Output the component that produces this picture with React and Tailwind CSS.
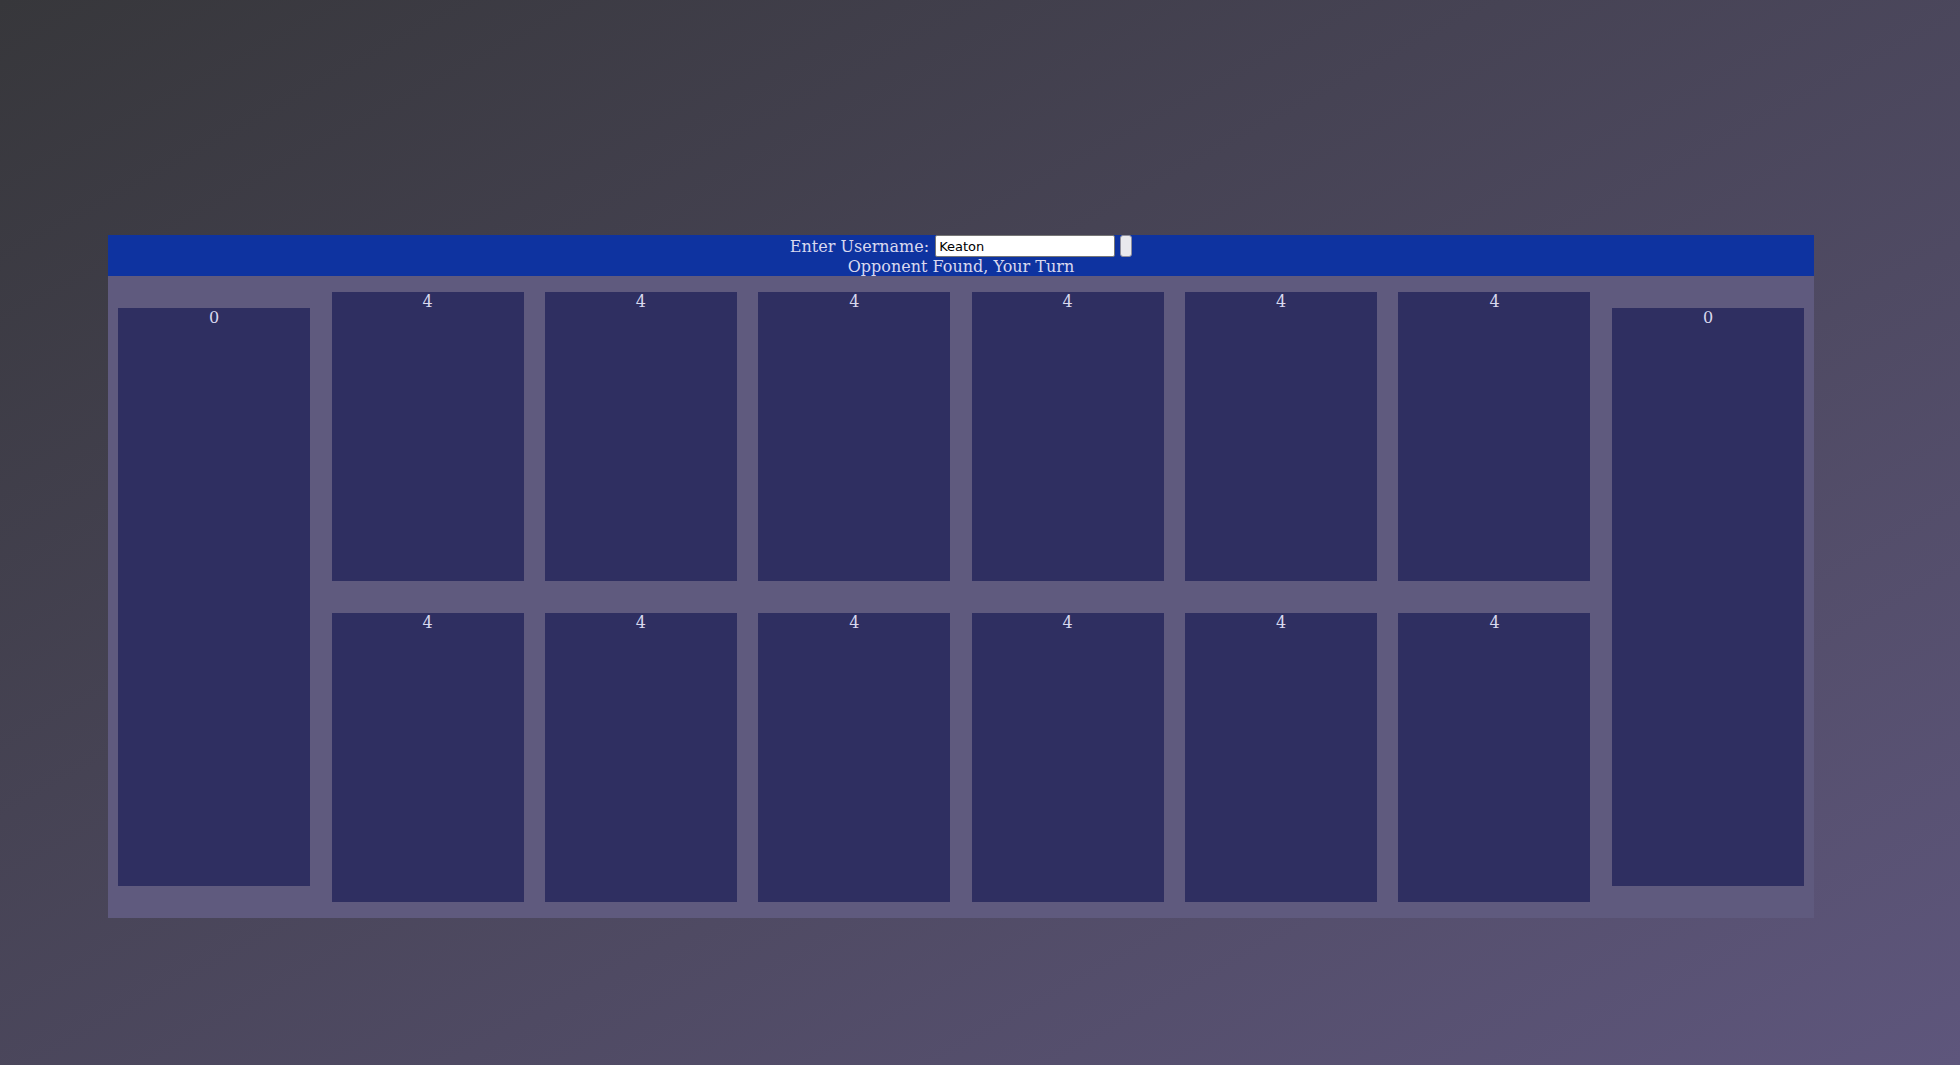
import React, { useState } from 'react';

const serif = { fontFamily: '"DejaVu Serif", serif' };

const Pit = ({ count, className = '' }) => (
  <div className={`w-[192px] bg-[#2f2f61] text-center text-[16px] leading-[19px] text-[#d9d9ef] ${className}`}>
    {count}
  </div>
);

const App = () => {
  const [username, setUsername] = useState('Keaton');
  const top = [4, 4, 4, 4, 4, 4];
  const bottom = [4, 4, 4, 4, 4, 4];

  return (
    <div
      className="min-h-[1065px] w-full bg-[linear-gradient(to_bottom_right,#37373b,#5e567c)] pt-[235px] pl-[108px]"
      style={serif}
    >
      <div className="w-[1706px]">
        {/* Header */}
        <div className="flex h-[41px] flex-col items-center bg-[#0e33a0] text-[16px] text-[#d9d9ef]">
          <div className="flex h-[22px] items-center">
            <span className="leading-[19px]">Enter Username:</span>
            <input
              value={username}
              onChange={(e) => setUsername(e.target.value)}
              className="ml-[6px] h-[22px] w-[180px] rounded-[2px] border border-[#767676] bg-white px-[3px] text-[13px] text-black outline-none"
              style={{ fontFamily: '"DejaVu Sans", sans-serif' }}
            />
            <button className="ml-[5px] h-[22px] w-[12px] rounded-[3px] border border-[#8f8f9d] bg-[#e9e9ed]"></button>
          </div>
          <div className="leading-[19px]">Opponent Found, Your Turn</div>
        </div>

        {/* Board */}
        <div className="flex h-[642px] items-center justify-between bg-[#5f5a7e] px-[10px]">
          <Pit count={0} className="h-[578px]" />
          <div className="flex h-full flex-col justify-between py-[16px]">
            <div className="flex gap-[21.4px]">
              {top.map((c, i) => (
                <Pit key={i} count={c} className="h-[289px]" />
              ))}
            </div>
            <div className="flex gap-[21.4px]">
              {bottom.map((c, i) => (
                <Pit key={i} count={c} className="h-[289px]" />
              ))}
            </div>
          </div>
          <Pit count={0} className="h-[578px]" />
        </div>
      </div>
    </div>
  );
};

export default App;
